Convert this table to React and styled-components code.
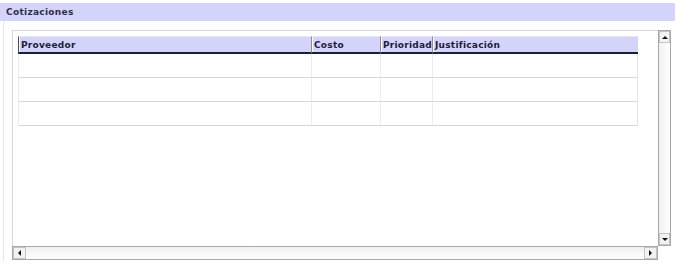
import styled, { createGlobalStyle } from "styled-components";

const GlobalStyle = createGlobalStyle`
  body {
    margin: 0;
    background: #ffffff;
    font-family: "DejaVu Sans", "Liberation Sans", sans-serif;
  }
`;

const Panel = styled.div`
  width: 681px;
  height: 268px;
  padding-top: 3px;
  box-sizing: border-box;
`;

const TitleBar = styled.div`
  width: 675px;
  height: 18px;
  background: #d4d4fa;
  display: flex;
  align-items: center;
  padding-left: 6px;
  box-sizing: border-box;
  font-size: 9px;
  font-weight: bold;
  color: #2e2e4a;
  letter-spacing: 0.3px;
`;

const Frame = styled.div`
  margin-left: 3px;
  width: 673px;
  height: 241px;
  border-left: 1px solid #e8e8e8;
  padding: 9px 0 0 8px;
  box-sizing: border-box;
`;

const ScrollPane = styled.div`
  display: grid;
  grid-template-columns: 646px 13px;
  grid-template-rows: 216px 14px;
`;

const Viewport = styled.div`
  border-top: 1px solid #d8d8d8;
  border-left: 1px solid #d8d8d8;
  padding: 5px 0 0 5px;
  box-sizing: border-box;
  overflow: hidden;
`;

const Grid = styled.div`
  width: 620px;
  font-size: 9px;
`;

const Row = styled.div`
  display: grid;
  grid-template-columns: 293px 69px 52px 206px;
`;

const HeadCell = styled.div`
  height: 18px;
  padding: 2px 0 0 2px;
  box-sizing: border-box;
  background: #d4d4fa;
  color: #1c1c3a;
  font-weight: bold;
  letter-spacing: 0.25px;
  line-height: 12px;
  border-left: 1px solid ${(p) => (p.$first ? "#4a4a6a" : "#8a8aa0")};
  border-top: 1px solid #e6e6f4;
  box-shadow: inset 1px 0 0 #ffffff;
  border-bottom: 2px solid #1e1e3a;
  white-space: nowrap;
  overflow: hidden;
`;

const Cell = styled.div`
  height: 24px;
  box-sizing: border-box;
  border-left: 1px solid #ececec;
  border-right: ${(p) => (p.$last ? "1px solid #e4e4e4" : "none")};
  border-bottom: 1px solid #d6d6d6;
`;

const Track = styled.div`
  background: linear-gradient(${(p) => (p.$vertical ? "90deg" : "180deg")}, #f0f0f0, #ffffff);
  border: 1px solid #a8a8a8;
  box-sizing: border-box;
  display: flex;
  flex-direction: ${(p) => (p.$vertical ? "column" : "row")};
  justify-content: space-between;
`;

const ArrowButton = styled.div`
  width: ${(p) => (p.$vertical ? "100%" : "13px")};
  height: ${(p) => (p.$vertical ? "12px" : "100%")};
  background: #f2f2f2;
  border: 1px solid #c4c4c4;
  box-sizing: border-box;
  display: flex;
  align-items: center;
  justify-content: center;
`;

const Corner = styled.div`
  background: #ffffff;
`;

const Arrow = ({ dir }) => {
  const pts = {
    up: "1,4 4,1 7,4",
    down: "1,1 4,4 7,1",
    left: "4,1 1,4 4,7",
    right: "1,1 4,4 1,7",
  }[dir];
  const vertical = dir === "up" || dir === "down";
  return (
    <svg width={vertical ? 8 : 5} height={vertical ? 5 : 8} viewBox={vertical ? "0 0 8 5" : "0 0 5 8"}>
      <polygon points={pts} fill="#111" />
    </svg>
  );
};

const columns = ["Proveedor", "Costo", "Prioridad", "Justificación"];
const rows = [0, 1, 2];

export default function App() {
  return (
    <>
      <GlobalStyle />
      <Panel>
        <TitleBar>Cotizaciones</TitleBar>
        <Frame>
          <ScrollPane>
            <Viewport>
              <Grid>
                <Row>
                  {columns.map((c, i) => (
                    <HeadCell key={c} $first={i === 0}>
                      {c}
                    </HeadCell>
                  ))}
                </Row>
                {rows.map((r) => (
                  <Row key={r}>
                    {columns.map((c, i) => (
                      <Cell key={c} $last={i === columns.length - 1} />
                    ))}
                  </Row>
                ))}
              </Grid>
            </Viewport>
            <Track $vertical>
              <ArrowButton $vertical>
                <Arrow dir="up" />
              </ArrowButton>
              <ArrowButton $vertical>
                <Arrow dir="down" />
              </ArrowButton>
            </Track>
            <Track>
              <ArrowButton>
                <Arrow dir="left" />
              </ArrowButton>
              <ArrowButton>
                <Arrow dir="right" />
              </ArrowButton>
            </Track>
            <Corner />
          </ScrollPane>
        </Frame>
      </Panel>
    </>
  );
}
